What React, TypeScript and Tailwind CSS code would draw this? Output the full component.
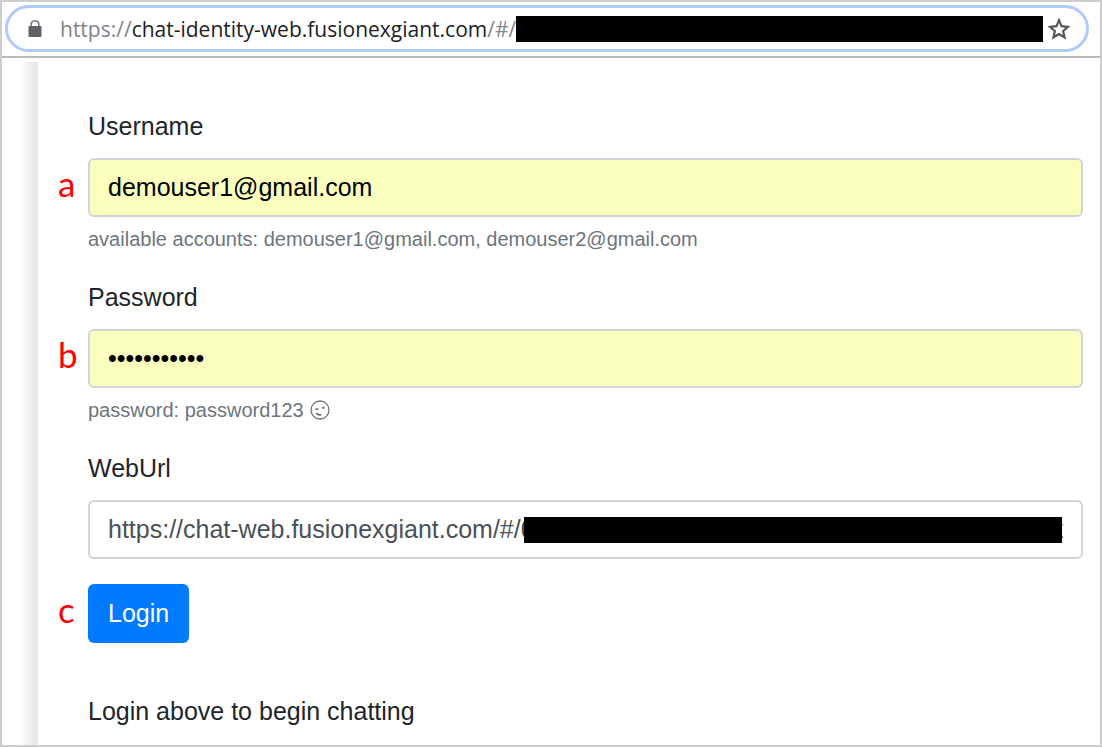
import type { ReactNode } from 'react';

const fieldClass =
  'block w-full h-[59px] rounded-md border-2 border-[#ced4da] px-[18px] text-[25px] outline-none';

function LockIcon() {
  return (
    <svg width="14" height="18" viewBox="0 0 14 18" className="shrink-0" aria-hidden="true">
      <path d="M3.2 7V4a3 3 0 0 1 3-3h1.6a3 3 0 0 1 3 3v3" fill="none" stroke="#777b80" strokeWidth="1.6" />
      <rect x="0.5" y="6" width="13" height="11" rx="1" fill="#5f6368" />
    </svg>
  );
}

function StarIcon() {
  return (
    <svg width="22" height="22" viewBox="0 0 22 22" aria-hidden="true">
      <path
        d="M11 2.2l2.5 6 6.5.6-4.9 4.3 1.5 6.3L11 16l-5.6 3.4 1.5-6.3L2 8.8l6.5-.6z"
        fill="none"
        stroke="#54585d"
        strokeWidth="2.2"
        strokeLinejoin="miter"
      />
    </svg>
  );
}

function WinkIcon() {
  return (
    <svg width="20" height="20" viewBox="0 0 20 20" fill="none" stroke="#6c757d" role="img" aria-label="wink">
      <circle cx="10" cy="10" r="9" strokeWidth="1.3" />
      <path d="M5.2 9.2h3.4" strokeWidth="1.6" />
      <path d="M12.2 7.8h2.4" strokeWidth="2" />
      <path d="M6.4 13c.8 1.6 2.4 2.2 5 1.6" strokeWidth="1.7" />
    </svg>
  );
}

function Marker({ children }: { children: ReactNode }) {
  return (
    <span className="self-center pb-2.5 font-['Lato',sans-serif] text-[35px] leading-10 text-[#ff0000]">
      {children}
    </span>
  );
}

function Label({ htmlFor, children }: { htmlFor: string; children: ReactNode }) {
  return (
    <label htmlFor={htmlFor} className="col-start-2 mb-[13px] leading-[38px]">
      {children}
    </label>
  );
}

function Help({ children }: { children: ReactNode }) {
  return (
    <p className="col-start-2 mt-[7px] mb-6 flex items-center gap-1.5 text-[20px] leading-[30px] text-[#6c757d]">
      {children}
    </p>
  );
}

export default function App() {
  return (
    <div className="flex min-h-screen flex-col border-2 border-[#cdcdcd] bg-white font-['Liberation_Sans',Arial,sans-serif] text-[25px] text-[#212529]">
      <header className="border-b-2 border-[#b9b9b9] pt-[3px] pr-[11px] pb-1 pl-[3px]">
        <div className="flex h-[47px] items-center rounded-full border-3 border-[#aecbfa] pr-4 pl-5">
          <LockIcon />
          <div className="ml-[18px] flex min-w-0 flex-1 items-center font-['Open_Sans',sans-serif] text-[21px] leading-[30px] text-[#80868b]">
            <span className="whitespace-nowrap">
              https://<span className="text-[#202124]">chat-identity-web.fusionexgiant.com</span>/#/0
            </span>
            <span className="relative -ml-3 h-[26px] flex-1 bg-black" />
          </div>
          <button type="button" aria-label="Bookmark this page" className="ml-[5px]">
            <StarIcon />
          </button>
        </div>
      </header>

      <div className="flex flex-1">
        <div className="w-9 shrink-0 pt-1 pl-[18px]">
          <div className="h-full bg-linear-to-r from-white to-[#e9e9e9] to-80%" />
        </div>
        <main className="min-w-0 flex-1 pt-[49px] pr-[17px] pl-5">
          <form className="grid grid-cols-[30px_minmax(0,1fr)]" onSubmit={(e) => e.preventDefault()}>
            <Label htmlFor="username">Username</Label>
            <Marker>a</Marker>
            <input
              id="username"
              type="text"
              defaultValue="demouser1@gmail.com"
              className={`${fieldClass} bg-[#faffbd] text-black`}
            />
            <Help>available accounts: demouser1@gmail.com, demouser2@gmail.com</Help>

            <Label htmlFor="password">Password</Label>
            <Marker>b</Marker>
            <input
              id="password"
              type="password"
              defaultValue="password123"
              className={`${fieldClass} bg-[#faffbd] text-black`}
            />
            <Help>
              password: password123 <WinkIcon />
            </Help>

            <Label htmlFor="weburl">WebUrl</Label>
            <div className="col-start-2 flex h-[59px] items-center rounded-md border-2 border-[#ced4da] px-[18px] text-[#495057]">
              <input
                id="weburl"
                type="text"
                defaultValue="https://chat-web.fusionexgiant.com/#/0"
                className="w-[428px] shrink-0 outline-none"
              />
              <span className="relative z-10 -ml-3 h-[26px] flex-1 bg-black" />
              <span className="-ml-[6px]">t</span>
            </div>

            <div className="col-span-2 mt-[25px] grid grid-cols-[30px_minmax(0,1fr)]">
              <Marker>c</Marker>
              <button
                type="submit"
                className="h-[59px] justify-self-start rounded-md bg-[#007bff] px-5 text-white"
              >
                Login
              </button>
            </div>
            <p className="col-start-2 mt-[49px] leading-[38px]">Login above to begin chatting</p>
          </form>
        </main>
      </div>
    </div>
  );
}
